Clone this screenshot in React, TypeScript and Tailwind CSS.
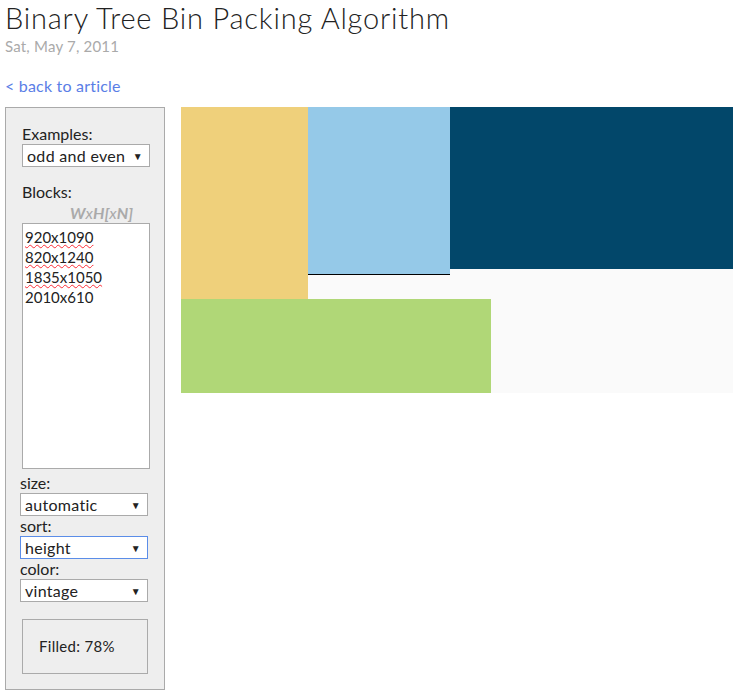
import React from "react";

// Demo page: binary tree bin packing. Left panel holds the controls, the right
// side is the packed canvas with absolutely placed blocks.

const font = { fontFamily: "Lato, 'Open Sans', sans-serif" };

function FakeSelect({ value, focused = false }: { value: string; focused?: boolean }) {
  return (
    <div
      className={
        "flex h-[23px] w-[128px] items-center justify-between bg-white pl-[4px] pr-[6px] text-[16px] leading-none tracking-[0.3px] text-[#222] " +
        (focused ? "border border-[#5b8de8]" : "border border-[#aaa]")
      }
    >
      <span>{value}</span>
      <span className="text-[10px]">▼</span>
    </div>
  );
}

const blocks = [
  { x: 0, y: 0, w: 127, h: 192, c: "bg-[#efd07b]" },
  { x: 127, y: 0, w: 142, h: 168, c: "bg-[#95c9e8] border-b border-black" },
  { x: 269, y: 0, w: 283, h: 162, c: "bg-[#02476a]" },
  { x: 0, y: 192, w: 310, h: 94, c: "bg-[#b0d777]" },
];

export default function App() {
  return (
    <div className="min-h-[698px] bg-white px-[5px] text-[#222]" style={font}>
      <h1 className="pt-[1px] text-[29px] font-light leading-[34px] tracking-[0.8px]">
        Binary Tree Bin Packing Algorithm
      </h1>
      <div className="text-[15px] leading-[22px] tracking-[0.2px] text-[#aaa]">Sat, May 7, 2011</div>
      <a className="mt-[18px] block text-[16px] leading-[22px] tracking-[0.2px] text-[#5a7ee6]">&lt; back to article</a>

      <div className="mt-[10px] flex items-start">
        <div className="h-[583px] w-[160px] shrink-0 border border-[#aaa] bg-[#eee] pl-[14px] pr-[14px] pt-[15px] text-[16px]">
          <div className="pl-[2px] leading-[21px]">Examples:</div>
          <div className="pl-[2px]">
            <FakeSelect value="odd and even" />
          </div>
          <div className="mt-[14px] pl-[2px] leading-[22px]">Blocks:</div>
          <div className="pr-[17px] text-right text-[16px] font-bold italic leading-[20px] text-[#aaa]">
            W<span className="font-normal">x</span>H[<span className="font-normal">x</span>N]
          </div>
          <div className="ml-[2px] h-[246px] w-[128px] border border-[#aaa] bg-white px-[2px] pt-[3px] text-[15px] leading-[20px]">
            <div><span className="underline decoration-wavy decoration-red-500 decoration-1">920x1090</span></div>
            <div><span className="underline decoration-wavy decoration-red-500 decoration-1">820x1240</span></div>
            <div><span className="underline decoration-wavy decoration-red-500 decoration-1">1835x1050</span></div>
            <div>2010x610</div>
          </div>
          <div className="mt-[3px] flex flex-col">
            <div className="leading-[21px]">size:</div>
            <FakeSelect value="automatic" />
            <div className="leading-[20px]">sort:</div>
            <FakeSelect value="height" focused />
            <div className="leading-[20px]">color:</div>
            <FakeSelect value="vintage" />
          </div>
          <div className="ml-[2px] mt-[17px] flex h-[55px] w-[126px] items-center border border-[#aaa] pl-[16px] text-[15px] tracking-[0.3px]">
            Filled: 78%
          </div>
        </div>

        <div className="relative ml-[16px] h-[286px] w-[552px] bg-[#fafafa]">
          {blocks.map((b, i) => (
            <div
              key={i}
              className={"absolute " + b.c}
              style={{ left: b.x, top: b.y, width: b.w, height: b.h }}
            />
          ))}
        </div>
      </div>
    </div>
  );
}
